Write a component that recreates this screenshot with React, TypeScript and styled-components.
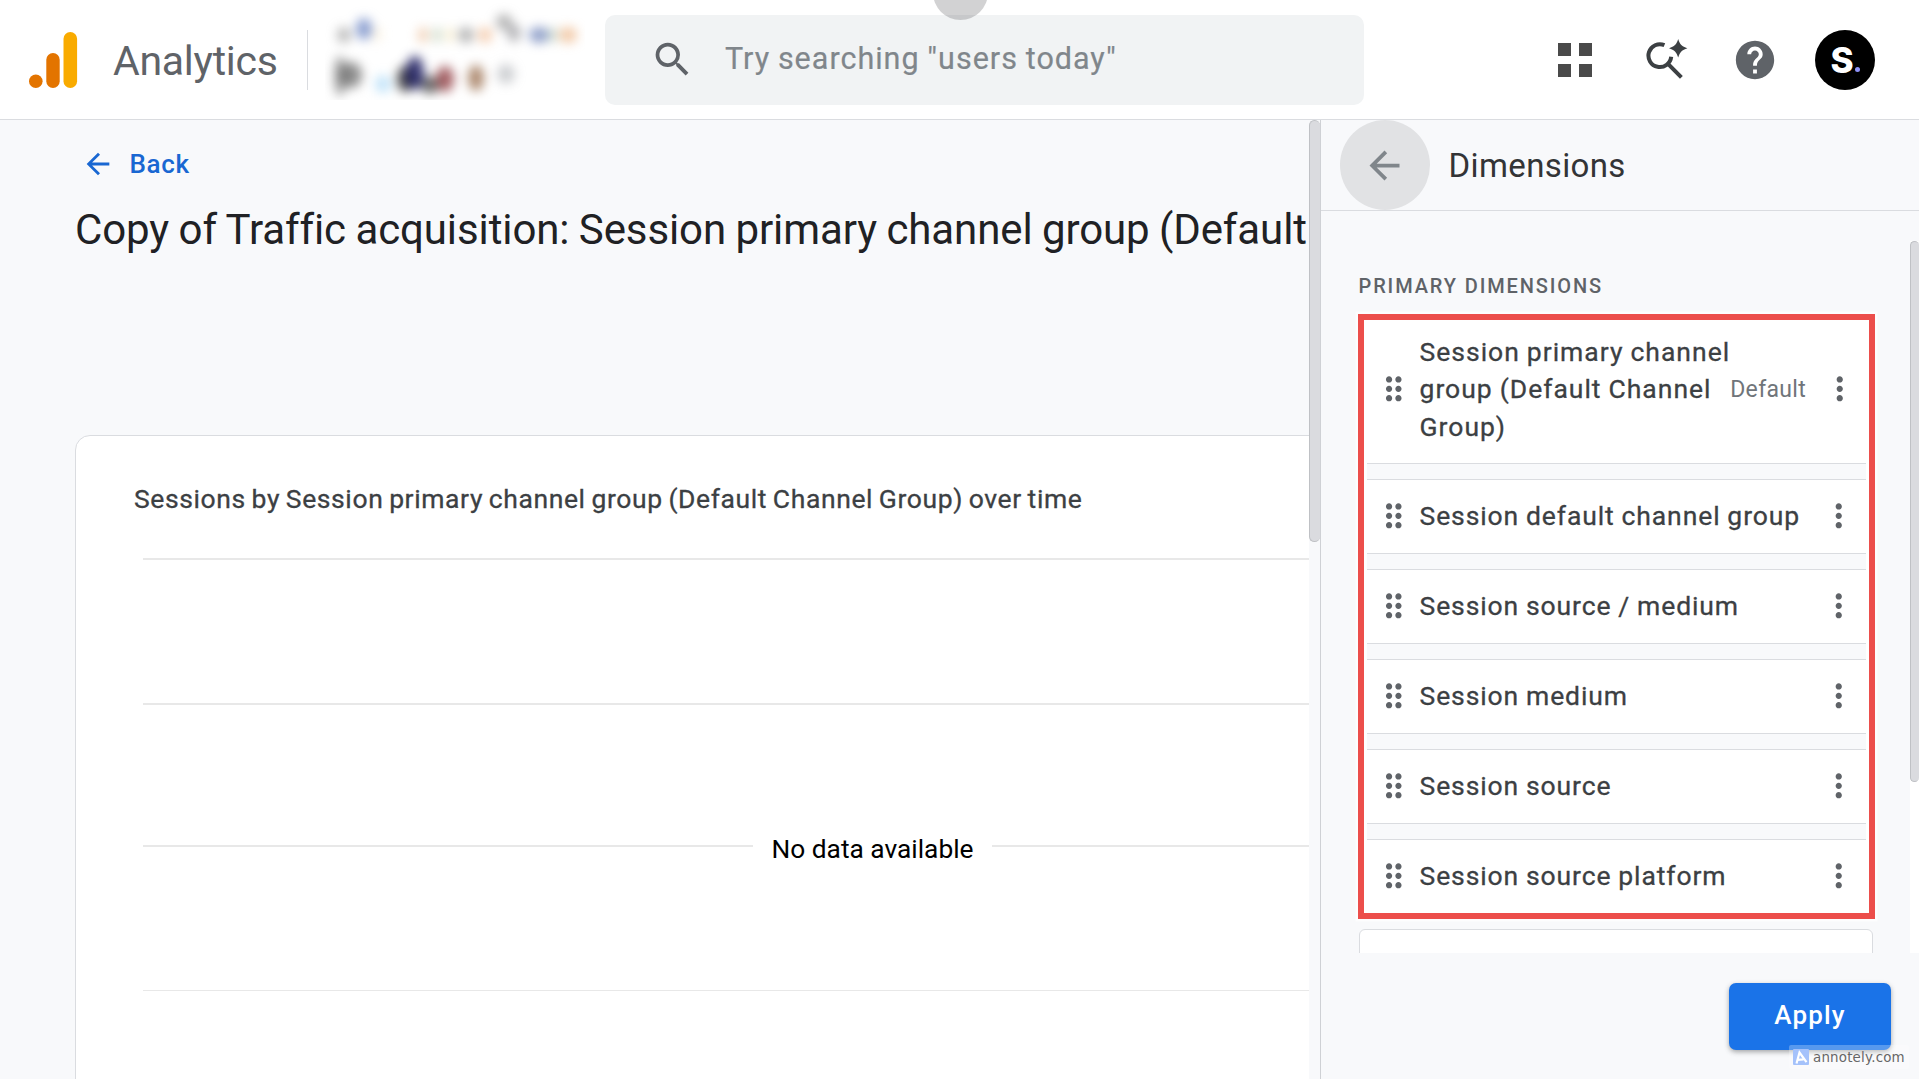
import React from "react";
import styled, { createGlobalStyle } from "styled-components";

const sans = `"Google Sans", Roboto, "Open Sans", sans-serif`;
const line = "#dadce0";
const canvas = "#f8f9fb";

const GlobalStyle = createGlobalStyle`
  * { box-sizing: border-box; }
  html, body { margin: 0; padding: 0; overflow: hidden; }
  body { font-family: ${sans}; color: #202124; background: #fff; }
  svg { display: block; flex: none; }
`;

const Page = styled.div`
  position: relative;
  display: flex;
  flex-direction: column;
  width: 1919px;
  height: 1079px;
  overflow: hidden;
`;

const TopBar = styled.header`
  display: flex;
  align-items: center;
  flex: none;
  height: 120px;
  padding-left: 29px;
  padding-right: 44px;
  background: #fff;
  border-bottom: 1px solid ${line};
`;

const Brand = styled.div`
  width: 194px;
  margin-left: 35px;
  padding-top: 3px;
  font-size: 41px;
  line-height: 48px;
  letter-spacing: -0.28px;
  color: #5f6368;
`;

const Separator = styled.div`
  width: 1px;
  height: 60px;
  background: ${line};
`;

const Account = styled.div`
  width: 260px;
  height: 100px;
  margin: 0 20px 19px 17px;
  overflow: hidden;
`;

const SearchBox = styled.div`
  display: flex;
  align-items: center;
  width: 759px;
  height: 90px;
  padding-left: 45px;
  border-radius: 10px;
  background: #f1f3f4;
`;

const Placeholder = styled.span`
  margin-left: 30px;
  padding-bottom: 2px;
  font-size: 30.5px;
  line-height: 36px;
  letter-spacing: 1px;
  word-spacing: -0.8px;
  -webkit-text-stroke: 0.2px #80868b;
  color: #80868b;
  white-space: pre;
`;

const Tools = styled.div`
  display: flex;
  align-items: center;
  margin-left: auto;
`;

const Gap = styled.div<{ $w: number }>`
  width: ${(p) => p.$w}px;
`;

const Avatar = styled.div`
  display: flex;
  align-items: center;
  justify-content: center;
  width: 60px;
  height: 60px;
  border-radius: 50%;
  background: #000;
  color: #fff;
  font: 800 35px/60px Inter, sans-serif;
`;

const Dot = styled.i`
  width: 5px;
  height: 5px;
  margin: 20px 0 0 1px;
  border-radius: 50%;
  background: #8f92f8;
`;

const Notch = styled.div`
  position: absolute;
  left: 933px;
  top: -35px;
  width: 55px;
  height: 55px;
  border-radius: 50%;
  background: rgba(60, 60, 65, 0.23);
`;

const Body = styled.div`
  display: flex;
  flex: 1;
  min-height: 0;
  background: ${canvas};
`;

const Report = styled.main`
  display: flex;
  flex-direction: column;
  width: 1309px;
  padding-left: 75px;
  overflow: hidden;
`;

const BackLink = styled.a`
  display: flex;
  align-items: center;
  height: 34px;
  margin: 27px 0 0 6px;
  gap: 14.5px;
  font-size: 26px;
  font-weight: 500;
  line-height: 34px;
  letter-spacing: 0.7px;
  color: #1967d2;
`;

const Title = styled.h1`
  height: 52px;
  margin: 23px 0 179px 0;
  font-size: 42px;
  font-weight: 400;
  line-height: 52px;
  letter-spacing: -0.1px;
  word-spacing: -0.9px;
  white-space: pre;
`;

const ReportCard = styled.section`
  display: flex;
  flex-direction: column;
  flex: none;
  width: 1300px;
  height: 760px;
  border: 1px solid ${line};
  border-radius: 15px;
  background: #fff;
`;

const CardTitle = styled.h2`
  height: 34px;
  margin: 46px 0 42px 58px;
  font-size: 26.5px;
  font-weight: 400;
  line-height: 34px;
  letter-spacing: 0.6px;
  word-spacing: -1.4px;
  -webkit-text-stroke: 0.3px #3c4043;
  color: #3c4043;
  white-space: pre;
`;

const Chart = styled.div`
  margin-left: 67px;
`;

const Band = styled.div<{ $h: number; $t?: number }>`
  height: ${(p) => p.$h}px;
  border-top: ${(p) => p.$t ?? 2}px solid #e8e8e8;
`;

const EmptyBand = styled.div`
  display: flex;
  height: 145px;
`;

const Rule = styled.div<{ $w: number }>`
  flex: none;
  width: ${(p) => p.$w}px;
  height: 2px;
  background: #e8e8e8;
`;

const EmptyText = styled.div`
  flex: none;
  width: 239px;
  margin-top: -12px;
  font: 400 26.3px/32px Roboto, sans-serif;
  text-align: center;
  color: #000;
`;

const ScrollTrack = styled.div<{ $w: number; $bg: string }>`
  flex: none;
  width: ${(p) => p.$w}px;
  background: ${(p) => p.$bg};
`;

const Thumb = styled.div<{ $h: number }>`
  height: ${(p) => p.$h}px;
  border: 1.5px solid #bfc1c5;
  border-right: 0;
  border-radius: 6px;
  background: #dadbdf;
`;

const Panel = styled.aside`
  display: flex;
  flex-direction: column;
  width: 599px;
  border-left: 1px solid #cfd1d5;
  background: ${canvas};
`;

const PanelHeader = styled.div`
  display: flex;
  align-items: center;
  flex: none;
  height: 91px;
  padding-left: 19px;
  border-bottom: 1px solid ${line};
`;

const RoundButton = styled.button`
  display: flex;
  align-items: center;
  justify-content: center;
  width: 90px;
  height: 90px;
  padding: 0 1px 0 0;
  border: 0;
  border-radius: 50%;
  background: #e1e2e4;
`;

const PanelTitle = styled.h2`
  margin: 0 0 0 18.5px;
  padding-top: 2px;
  font-size: 33px;
  font-weight: 400;
  line-height: 40px;
  letter-spacing: 0.38px;
  color: #333436;
`;

const PanelScroll = styled.div`
  display: flex;
  flex: none;
  height: 712px;
  margin-top: 30px;
`;

const PanelContent = styled.div`
  width: 590px;
  padding-left: 38px;
  overflow: hidden;
`;

const Section = styled.h3`
  height: 26px;
  margin: 32px 0 16px -0.5px;
  font: 500 20px/26px Roboto, sans-serif;
  letter-spacing: 1.87px;
  color: #5f6368;
`;

const List = styled.div`
  position: relative;
  display: flex;
  flex-direction: column;
  gap: 15px;
  width: 514px;
`;

const Item = styled.div<{ $h?: number }>`
  display: flex;
  align-items: center;
  flex: none;
  height: ${(p) => p.$h ?? 75}px;
  padding: 0 15px 1px 15px;
  border: 1px solid ${line};
  border-radius: 6px;
  background: #fff;
`;

const Name = styled.span<{ $multi: boolean }>`
  flex: 1;
  margin-left: 7px;
  padding-bottom: ${(p) => (p.$multi ? 0 : 1)}px;
  font-size: 26.5px;
  font-weight: 400;
  line-height: 37.5px;
  letter-spacing: ${(p) => (p.$multi ? 1 : 0.9)}px;
  word-spacing: -0.6px;
  -webkit-text-stroke: 0.3px #3c4043;
  color: #3c4043;
  white-space: pre;
`;

const Tag = styled.span`
  margin-right: 15px;
  padding-top: 2px;
  font-size: 23px;
  line-height: 30px;
  letter-spacing: 0.35px;
  color: #70757a;
`;

const Highlight = styled.div`
  position: absolute;
  left: -1px;
  top: -1px;
  width: 517px;
  height: 605px;
  border: 6px solid #ec4e4b;
  box-shadow: 0 0 0 2.5px rgba(255, 255, 255, 0.7), inset 0 0 0 3px #fff;
`;

const PanelFooter = styled.div`
  display: flex;
  justify-content: flex-end;
  padding: 30px 28px 0 0;
`;

const ApplyButton = styled.button`
  width: 162px;
  height: 67px;
  padding: 0 0 4px;
  border: 0;
  border-radius: 7px;
  background: #1a73e8;
  box-shadow: 0 2px 5px rgba(60, 64, 67, 0.45);
  font: 500 26px/34px ${sans};
  letter-spacing: 1.2px;
  color: #fff;
`;

const Watermark = styled.div`
  position: absolute;
  left: 1789px;
  top: 1045px;
  display: flex;
  align-items: center;
  width: 120px;
  height: 24px;
  padding-left: 4px;
  gap: 4px;
  border-radius: 2px;
  background: rgba(255, 255, 255, 0.27);
  font: 400 13.4px/20px "DejaVu Sans", sans-serif;
  letter-spacing: 0.2px;
  color: #666;
`;

const WatermarkText = styled.span`
  padding-top: 2px;
`;

const Logo = () => (
  <svg width="49" height="56" viewBox="0 0 49 56">
    <circle cx="6.8" cy="49.2" r="6.8" fill="#e37400" />
    <rect x="17.3" y="21" width="13.4" height="35" rx="6.7" fill="#e37400" />
    <rect x="34.5" y="0" width="13.6" height="56" rx="6.8" fill="#f9ab00" />
  </svg>
);

const blobs: [number, number, number, number, string, number][] = [
  [19, 35, 7, 8, "#777", 0.5], [39, 29, 8, 11, "#5b78bd", 0.7], [52, 34, 4, 8, "#f3dcae", 0.4],
  [98, 35, 5, 8, "#e8b184", 0.6], [112, 35, 5, 8, "#a9c2a2", 0.5], [125, 35, 4, 8, "#f1dfa5", 0.55],
  [141, 35, 8, 8, "#707070", 0.5], [160, 35, 7, 8, "#f0b68a", 0.65], [179, 22, 8, 8, "#6d6d6d", 0.5],
  [189, 33, 7, 9, "#6d6d75", 0.5], [214, 35, 10, 8, "#566fae", 0.65], [228, 35, 4, 8, "#94b295", 0.5],
  [243, 35, 9, 8, "#eaa66e", 0.6], [15, 76, 6, 20, "#444", 0.5], [26, 75, 11, 13, "#454545", 0.6],
  [58, 84, 8, 9, "#9bd2f5", 0.6], [80, 79, 8, 13, "#151515", 0.75], [90, 73, 9, 17, "#15155c", 0.85],
  [105, 85, 9, 9, "#2e2e2e", 0.7], [120, 79, 9, 13, "#872c32", 0.75], [151, 78, 8, 13, "#8c5a35", 0.7],
  [181, 74, 9, 10, "#7e848c", 0.38],
];

const BlurredAccount = () => (
  <svg width="260" height="100" viewBox="0 0 260 100">
    <filter id="soft" x="-20%" y="-20%" width="140%" height="140%" colorInterpolationFilters="sRGB">
      <feGaussianBlur stdDeviation="5.4" />
    </filter>
    <g filter="url(#soft)">
      {blobs.map(([x, y, rx, ry, fill, opacity], i) => (
        <ellipse key={i} cx={x} cy={y} rx={rx} ry={ry} fill={fill} opacity={opacity} />
      ))}
    </g>
  </svg>
);

const Icon = ({ size, color, d }: { size: number; color: string; d: string }) => (
  <svg width={size} height={size} viewBox="0 0 24 24" fill={color}><path d={d} /></svg>
);

const paths = {
  search: "M15.5 14h-.79l-.28-.27A6.471 6.471 0 0 0 16 9.5 6.5 6.5 0 1 0 9.5 16c1.61 0 3.09-.59 4.23-1.57l.27.28v.79l5 4.99L20.49 19l-4.99-5zm-6 0C7.01 14 5 11.99 5 9.5S7.01 5 9.5 5 14 7.01 14 9.5 11.99 14 9.5 14z",
  back: "M20 11H7.83l5.59-5.59L12 4l-8 8 8 8 1.41-1.41L7.83 13H20v-2z",
  help: "M12 2C6.48 2 2 6.48 2 12s4.48 10 10 10 10-4.48 10-10S17.52 2 12 2zm1 17h-2v-2h2v2zm2.07-7.75l-.9.92C13.45 12.9 13 13.5 13 15h-2v-.5c0-1.1.45-2.1 1.17-2.83l1.24-1.26c.37-.36.59-.86.59-1.41 0-1.1-.9-2-2-2s-2 .9-2 2H8c0-2.21 1.79-4 4-4s4 1.79 4 4c0 .88-.36 1.68-.93 2.25z",
  drag: "M11 18c0 1.1-.9 2-2 2s-2-.9-2-2 .9-2 2-2 2 .9 2 2zm-2-8c-1.1 0-2 .9-2 2s.9 2 2 2 2-.9 2-2-.9-2-2-2zm0-6c-1.1 0-2 .9-2 2s.9 2 2 2 2-.9 2-2-.9-2-2-2zm6 4c1.1 0 2-.9 2-2s-.9-2-2-2-2 .9-2 2 .9 2 2 2zm0 2c-1.1 0-2 .9-2 2s.9 2 2 2 2-.9 2-2-.9-2-2-2zm0 6c-1.1 0-2 .9-2 2s.9 2 2 2 2-.9 2-2-.9-2-2-2z",
  more: "M12 8c1.1 0 2-.9 2-2s-.9-2-2-2-2 .9-2 2 .9 2 2 2zm0 2c-1.1 0-2 .9-2 2s.9 2 2 2 2-.9 2-2-.9-2-2-2zm0 6c-1.1 0-2 .9-2 2s.9 2 2 2 2-.9 2-2-.9-2-2-2z",
};

const AppsIcon = () => (
  <svg width="34" height="34" viewBox="0 0 34 34" fill="#4a4a4a">
    <path d="M0 0h13v13H0zM21 0h13v13H21zM0 21h13v13H0zM21 21h13v13H21z" />
  </svg>
);

const InsightsIcon = () => (
  <svg width="42" height="42" viewBox="0 0 42 42" fill="none" stroke="#3c4043" strokeWidth="4">
    <path d="M18.4 6.2A11.4 11.4 0 1 0 25.2 17.8M22 24.9 35.4 38.4" />
    <path d="M32.2 0c1.7 5.5 3.7 7.5 9.2 9.3-5.5 1.8-7.5 3.8-9.2 9.3-1.7-5.5-3.7-7.5-9.2-9.3 5.5-1.8 7.5-3.8 9.2-9.3z" fill="#3c4043" stroke="none" />
  </svg>
);

const AnnotelyMark = () => (
  <svg width="16" height="16" viewBox="0 0 16 16">
    <rect width="16" height="16" rx="1" fill="#a5c2fb" />
    <path d="M3.5 14.5 6.5 3.5 13.5 13.2M4.6 10.8 10.5 10.3" fill="none" stroke="#fff" strokeWidth="2.2" />
  </svg>
);

const names = [
  "Session default channel group",
  "Session source / medium",
  "Session medium",
  "Session source",
  "Session source platform",
  "",
];

const Dimension = ({ name, tag, h }: { name: string; tag?: string; h?: number }) => (
  <Item $h={h}>
    <Icon size={37.5} color="#5f6368" d={paths.drag} />
    <Name $multi={name.includes("\n")}>{name}</Name>
    {tag && <Tag>{tag}</Tag>}
    <Icon size={37.5} color="#5f6368" d={paths.more} />
  </Item>
);

export default function App() {
  return (
    <Page>
      <GlobalStyle />
      <TopBar>
        <Logo />
        <Brand>Analytics</Brand>
        <Separator />
        <Account><BlurredAccount /></Account>
        <SearchBox>
          <Icon size={45} color="#5f6368" d={paths.search} />
          <Placeholder>Try searching "users today"</Placeholder>
        </SearchBox>
        <Tools>
          <AppsIcon />
          <Gap $w={54} />
          <InsightsIcon />
          <Gap $w={44} />
          <Icon size={46} color="#5f6368" d={paths.help} />
          <Gap $w={37} />
          <Avatar>S<Dot /></Avatar>
        </Tools>
      </TopBar>
      <Body>
        <Report>
          <BackLink><Icon size={34} color="#1967d2" d={paths.back} />Back</BackLink>
          <Title>Copy of Traffic acquisition: Session primary channel group (Default</Title>
          <ReportCard>
            <CardTitle>Sessions by Session primary channel group (Default Channel Group) over time</CardTitle>
            <Chart>
              <Band $h={145} />
              <Band $h={142} />
              <EmptyBand>
                <Rule $w={610} />
                <EmptyText>No data available</EmptyText>
                <Rule $w={380} />
              </EmptyBand>
              <Band $h={100} $t={1} />
            </Chart>
          </ReportCard>
        </Report>
        <ScrollTrack $w={11} $bg={canvas}><Thumb $h={422} /></ScrollTrack>
        <Panel>
          <PanelHeader>
            <RoundButton><Icon size={45} color="#80868b" d={paths.back} /></RoundButton>
            <PanelTitle>Dimensions</PanelTitle>
          </PanelHeader>
          <PanelScroll>
            <PanelContent>
              <Section>PRIMARY DIMENSIONS</Section>
              <List>
                <Dimension h={149} name={"Session primary channel\ngroup (Default Channel\nGroup)"} tag="Default" />
                {names.map((n) => <Dimension key={n} name={n} />)}
                <Highlight />
              </List>
            </PanelContent>
            <ScrollTrack $w={9} $bg="#fff"><Thumb $h={541} /></ScrollTrack>
          </PanelScroll>
          <PanelFooter><ApplyButton>Apply</ApplyButton></PanelFooter>
        </Panel>
      </Body>
      <Notch />
      <Watermark><AnnotelyMark /><WatermarkText>annotely.com</WatermarkText></Watermark>
    </Page>
  );
}
